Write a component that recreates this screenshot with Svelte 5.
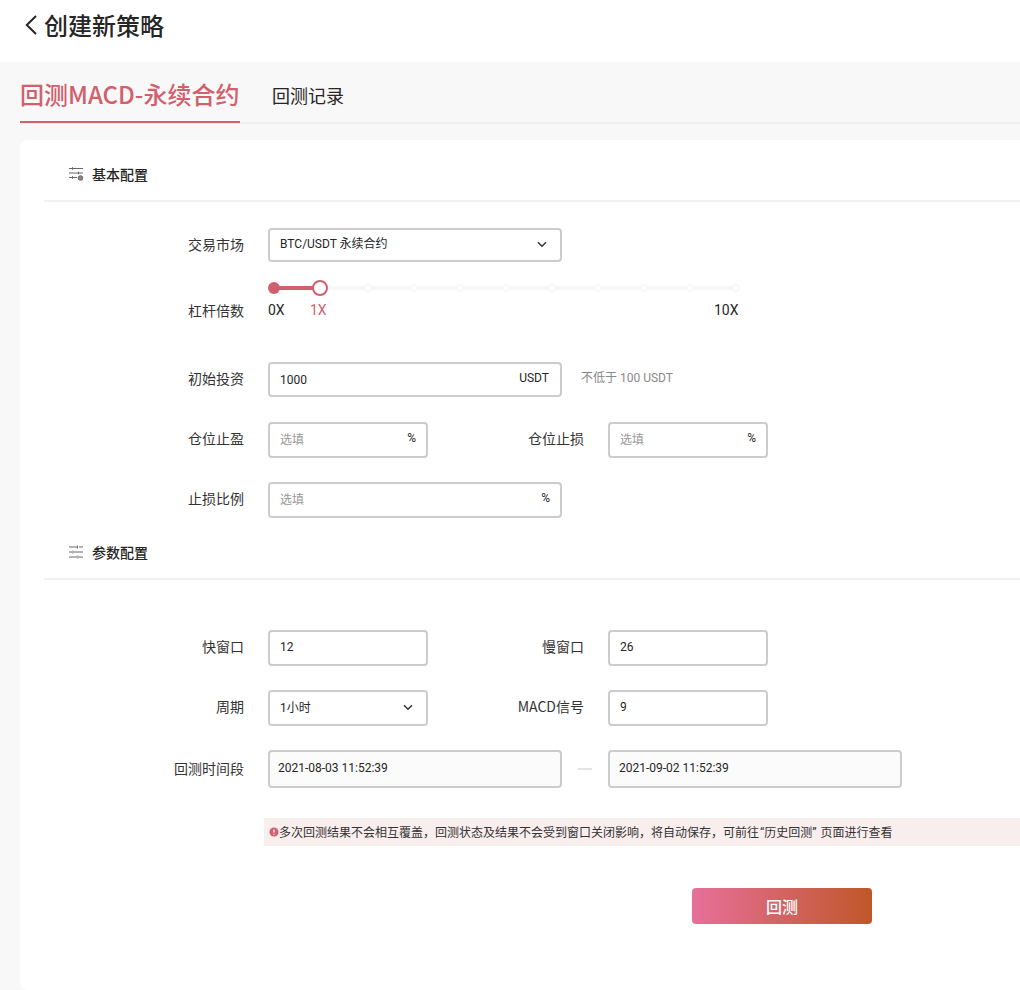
<script>
  const dots = [2, 3, 4, 5, 6, 7, 8, 9, 10];
</script>

<div class="page">
  <header class="top">
    <svg class="back" width="14" height="22" viewBox="0 0 14 22" fill="none"><path d="M12 2 2.800 11 12 20" stroke="#262626" stroke-width="2"/></svg>
    <h1>创建新策略</h1>
  </header>
  <main class="body">
    <nav class="tabs">
      <span class="tab active">回测MACD-永续合约</span>
      <span class="tab plain">回测记录</span>
    </nav>
    <section class="card">
      <div class="head first">
        <svg width="16" height="14" viewBox="0 0 16 14" fill="none" stroke="#666" stroke-width="1">
          <path d="M1 1.500h14M4.500 .2v2.600M1 6h14M10.500 4.700v2.600M1 10.500h8M4.500 9.200v2.600"/>
          <circle cx="12.500" cy="11" r="2.300" fill="#888"/>
        </svg>
        <span>基本配置</span>
      </div>

      <div class="row market">
        <label>交易市场</label>
        <div class="field wide"><span class="val cjk raised">BTC/USDT 永续合约</span>
          <svg class="chev" width="10" height="7" viewBox="0 0 10 7" fill="none"><path d="M1 1.200 5 5.200l4-4" stroke="#333" stroke-width="1.500"/></svg>
        </div>
      </div>

      <div class="row lever">
        <label>杠杆倍数</label>
        <div class="slider">
          <div class="rail">
            <span class="fill"></span>
            <span class="stop start"></span>
            <span class="stop handle"></span>
            {#each dots as d (d)}<span class="stop dot" style:left="{d * 46 - 2}px"></span>{/each}
          </div>
          <div class="marks"><span class="m0">0X</span><span class="m1">1X</span><span class="m10">10X</span></div>
        </div>
      </div>

      <div class="row invest">
        <label>初始投资</label>
        <div class="field wide"><span class="val plainval">1000</span><span class="unit usdt">USDT</span></div>
        <span class="hint">不低于 100 USDT</span>
      </div>

      <div class="row next after-invest">
        <label>仓位止盈</label>
        <div class="field narrow"><span class="val ph cjk">选填</span><span class="unit">%</span></div>
        <label class="second">仓位止损</label>
        <div class="field narrow"><span class="val ph cjk">选填</span><span class="unit">%</span></div>
      </div>

      <div class="row next">
        <label>止损比例</label>
        <div class="field wide"><span class="val ph cjk">选填</span><span class="unit">%</span></div>
      </div>

      <div class="head second-head">
        <svg width="16" height="14" viewBox="0 0 16 14" fill="none" stroke="#666" stroke-width="1">
          <path d="M1 2h8M11 2h4M9.500 .5v3M1 7h3M6 7h9M5 5.500v3M1 12h8M11 12h4M10 10.500v3"/>
        </svg>
        <span>参数配置</span>
      </div>

      <div class="row params">
        <label>快窗口</label>
        <div class="field narrow"><span class="val">12</span></div>
        <label class="second">慢窗口</label>
        <div class="field narrow"><span class="val">26</span></div>
      </div>

      <div class="row next">
        <label>周期</label>
        <div class="field narrow"><span class="val cjk">1小时</span>
          <svg class="chev" width="10" height="7" viewBox="0 0 10 7" fill="none"><path d="M1 1.200 5 5.200l4-4" stroke="#333" stroke-width="1.500"/></svg>
        </div>
        <label class="second">MACD信号</label>
        <div class="field narrow"><span class="val">9</span></div>
      </div>

      <div class="row next date-row">
        <label>回测时间段</label>
        <div class="field date"><span class="val">2021-08-03 11:52:39</span></div>
        <span class="dash"></span>
        <div class="field date end"><span class="val">2021-09-02 11:52:39</span></div>
      </div>

      <div class="notice">
        <svg width="10" height="10" viewBox="0 0 10 10"><circle cx="5" cy="5" r="4.500" fill="#d0606c"/><path d="M5 2.500v3M5 6.700v1" stroke="#fff" stroke-width="1.200"/></svg>
        <span class="notice-text">多次回测结果不会相互覆盖，回测状态及结果不会受到窗口关闭影响，将自动保存，可前往<span class="quoted">“历史回测”</span>页面进行查看</span>
      </div>

      <div class="actions"><button type="button">回测</button></div>
    </section>
  </main>
</div>

<style>
  :global(body) {
    margin: 0;
    background: #fff;
    font-family: Roboto, "Noto Sans CJK SC", sans-serif;
    color: #262626;
  }
  .page {
    width: 1020px;
    height: 990px;
    overflow: hidden;
    display: flex;
    flex-direction: column;
  }
  .top {
    height: 62px;
    box-sizing: border-box;
    padding: 0 0 12px 24px;
    display: flex;
    align-items: center;
    gap: 6px;
    background: #fff;
  }
  .back { flex: none; }
  h1 {
    margin: 0;
    font-size: 24px;
    line-height: 32px;
    font-weight: 500;
    color: #262626;
    font-family: "Noto Sans CJK SC", sans-serif;
  }
  .body {
    flex: 1;
    background: #f8f8f8;
    padding-left: 20px;
    min-height: 0;
  }
  .tabs {
    height: 62px;
    box-sizing: border-box;
    border-bottom: 2px solid #efefef;
    display: flex;
    align-items: center;
    gap: 32px;
  }
  .tab {
    font-size: 18px;
    line-height: 62px;
    height: 62px;
    box-sizing: border-box;
    font-family: "Noto Sans CJK SC", sans-serif;
    color: #262626;
  }
  .tab.plain { padding-top: 3px; }
  .tab.active {
    font-size: 24px;
    font-weight: 500;
    color: #d0606c;
    border-bottom: 2px solid #d0606c;
    line-height: 65px;
    width: 220px;
    white-space: nowrap;
  }
  .card {
    margin-top: 16px;
    height: 850px;
    background: #fff;
    border-radius: 8px 0 0 8px;
    box-sizing: border-box;
    padding-left: 24px;
  }
  .head {
    height: 62px;
    box-sizing: border-box;
    border-bottom: 2px solid #f2f2f2;
    display: flex;
    align-items: center;
    gap: 8px;
    padding-left: 24px;
    font-family: "Noto Sans CJK SC", sans-serif;
    font-size: 14px;
    font-weight: 500;
    color: #262626;
  }
  .head.first { padding-top: 8px; }
  .head.second-head {
    margin-top: 4px;
    height: 58px;
    padding-top: 4px;
  }
  .row {
    display: flex;
    align-items: center;
    height: 36px;
  }
  .market { margin-top: 26px; height: 34px; }
  .lever {
    margin-top: 20px;
    height: 38px;
    align-items: flex-end;
  }
  .invest { margin-top: 42px; height: 35px; }
  .next { margin-top: 24px; }
  .next.after-invest { margin-top: 25px; }
  .params { margin-top: 50px; }
  .date-row { height: 38px; }
  label {
    width: 200px;
    margin-right: 24px;
    padding-bottom: 3px;
    text-align: right;
    font-family: "Noto Sans CJK SC", sans-serif;
    font-size: 14px;
    color: #333;
    flex: none;
  }
  label.second { width: 156px; }
  .lever label { line-height: 20px; padding-bottom: 0; }
  .next label, .params label { padding-bottom: 5px; }
  .date-row label { padding-bottom: 3px; }
  .field {
    flex: none;
    height: 100%;
    box-sizing: border-box;
    border: 2px solid #ccc;
    border-radius: 4px;
    padding: 0 10px;
    display: flex;
    align-items: center;
    justify-content: space-between;
    font-size: 12px;
    background: #fff;
  }
  .wide { width: 294px; }
  .narrow { width: 160px; }
  .date { width: 294px; background: #fbfbfb; padding-left: 8px; }
  .date.end { padding-left: 9px; }
  .val { color: #262626; white-space: nowrap; position: relative; top: -1px; }
  .val.cjk { top: -2px; }
  .val.raised { top: -3px; }
  .val.plainval { top: 0; }
  .ph { color: #999; }
  .unit { position: relative; top: -2px; font-size: 12px; color: #262626; }
  .unit.usdt { margin-right: 1px; }
  .chev { position: relative; top: -1px; margin-right: 3px; }
  .hint { margin-left: 19px; margin-top: -6px; font-size: 12px; color: #888; }
  .dash {
    flex: none;
    width: 14px;
    height: 2px;
    background: #e4e4e4;
    margin: 0 16px;
  }
  .slider {
    width: 470px;
    position: relative;
    height: 38px;
    margin-bottom: -1px;
  }
  .rail {
    position: absolute;
    left: 6px;
    top: 3px;
    width: 463px;
    height: 4px;
    background: #f7f7f7;
  }
  .fill {
    position: absolute;
    left: 0;
    top: 0;
    width: 46px;
    height: 4px;
    background: #d0606c;
  }
  .stop {
    position: absolute;
    border-radius: 50%;
    box-sizing: border-box;
  }
  .start { left: -6px; top: -4px; width: 12px; height: 12px; background: #d0606c; }
  .handle { left: 38px; top: -6px; width: 16px; height: 16px; background: #fff; border: 2px solid #d0606c; }
  .dot {
    width: 8px;
    height: 8px;
    top: -2px;
    background: #fdfdfd;
    border: 1px solid #f5f5f5;
  }
  .marks {
    position: absolute;
    top: 18px;
    left: 0;
    right: 0;
    font-size: 14px;
    line-height: 18px;
  }
  .marks span { position: absolute; }
  .m0 { left: 0; color: #262626; }
  .m1 { left: 42px; color: #d0606c; }
  .m10 { left: 446px; color: #262626; }
  .notice {
    margin: 30px 0 0 220px;
    height: 28px;
    background: #f9eeee;
    display: flex;
    align-items: center;
    padding-left: 5px;
    font-size: 12px;
    color: #333;
    white-space: nowrap;
  }
  .notice svg { flex: none; }
  .notice-text { position: relative; top: -1px; }
  .quoted { margin: 0 4px 0 1px; }
  .actions {
    margin-top: 42px;
    padding-left: 648px;
  }
  button {
    width: 180px;
    height: 36px;
    border: 0;
    border-radius: 4px;
    background: linear-gradient(90deg, #e6709a 0%, #c0572a 100%);
    color: #fff;
    font-family: "Noto Sans CJK SC", sans-serif;
    font-size: 16px;
    font-weight: 500;
    padding: 0;
  }
</style>
